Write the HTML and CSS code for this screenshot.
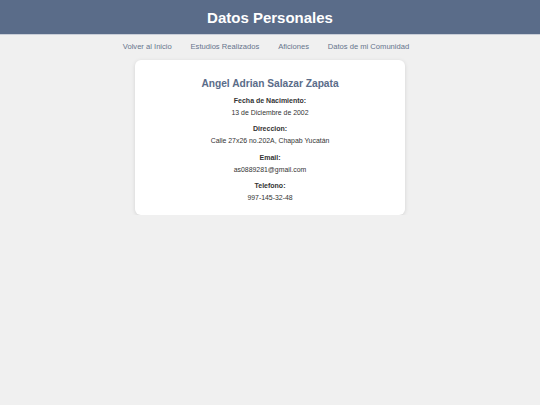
FILE: index.html
```html
<!DOCTYPE html>
<html lang="es">
<head>
  <meta charset="UTF-8">
  <meta name="viewport" content="width=device-width, initial-scale=1.0">
  <title>Datos Personales</title>
  <link rel="stylesheet" href="styles.css">
</head>
<body>
  <header class="header">
    <h1>Datos Personales</h1>
  </header>
  <nav class="nav">
    <a href="#">Volver al Inicio</a>
    <a href="#">Estudios Realizados</a>
    <a href="#">Aficiones</a>
    <a href="#">Datos de mi Comunidad</a>
  </nav>
  <div class="card">
    <h2>Angel Adrian Salazar Zapata</h2>
    <div class="item">
      <div class="label">Fecha de Nacimiento:</div>
      <div class="value">13 de Diciembre de 2002</div>
    </div>
    <div class="item">
      <div class="label">Direccion:</div>
      <div class="value">Calle 27x26 no.202A, Chapab Yucatán</div>
    </div>
    <div class="item">
      <div class="label">Email:</div>
      <div class="value">as0889281@gmail.com</div>
    </div>
    <div class="item">
      <div class="label">Telefono:</div>
      <div class="value">997-145-32-48</div>
    </div>
  </div>
</body>
</html>
```

FILE: styles.css
```css
*{
  margin: 0;
  padding: 0;
  box-sizing: border-box;
}
body{
  font-family: "Liberation Sans", Arial, sans-serif;
  background: #f0f0f0;
  color: #333;
}
.header{
  height: 35px;
  background: #5a6c89;
  border-bottom: 1px solid #c9ced8;
  display: flex;
  align-items: center;
  justify-content: center;
}
.header h1{
  color: #fff;
  font-size: 15px;
  font-weight: bold;
}
.nav{
  display: flex;
  justify-content: center;
  padding: 7px 8px 0 0;
  height: 25px;
}
.nav a{
  font-size: 7.6px;
  color: #66748c;
  text-decoration: none;
  margin: 0 9.4px;
}
.card{
  width: 270px;
  margin: 0 auto;
  background: #fff;
  border-radius: 6px;
  box-shadow: 0 1px 4px rgba(0,0,0,0.12);
  padding: 18px 10px 13px;
  text-align: center;
}
.card h2{
  font-size: 10.2px;
  color: #5a6c89;
  line-height: 12px;
  margin-bottom: 7px;
}
.item{
  margin-bottom: 8.5px;
}
.item:last-child{
  margin-bottom: 0;
}
.label{
  font-size: 7px;
  font-weight: bold;
  line-height: 8px;
  margin-bottom: 3.9px;
}
.value{
  font-size: 6.9px;
  line-height: 8px;
}
```
